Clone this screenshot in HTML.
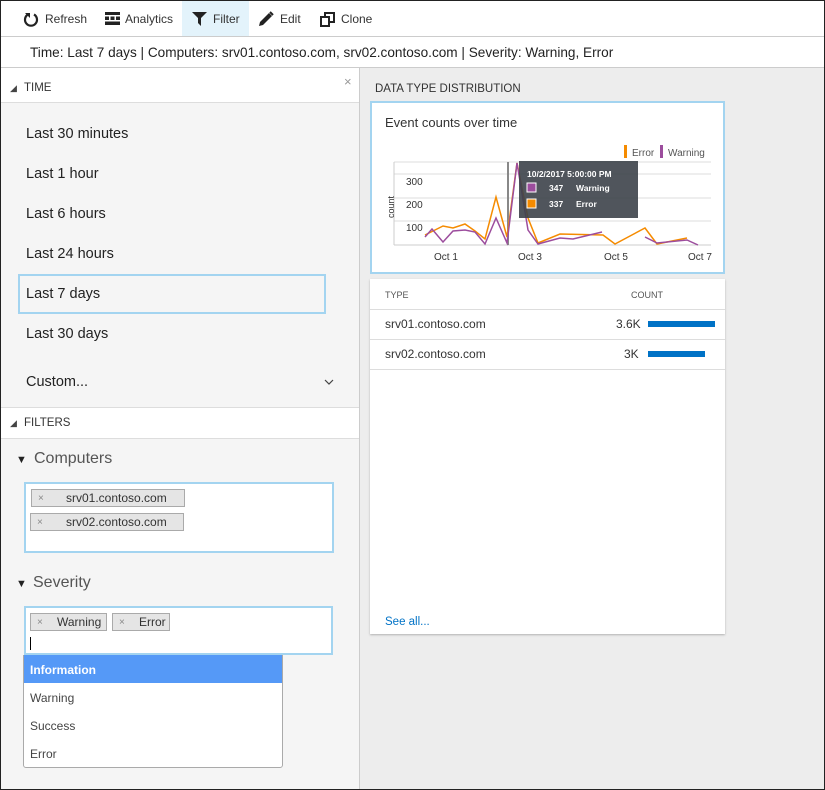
<!DOCTYPE html>
<html><head><meta charset="utf-8"><style>
*{box-sizing:border-box;margin:0;padding:0}
body{width:825px;height:790px;overflow:hidden;font-family:"Liberation Sans",sans-serif;color:#333;background:#fff}
.frame{position:absolute;left:0;top:0;width:825px;height:790px;border:1px solid #222}
.a{position:absolute}
.tb{font-size:12px;color:#333;top:12px}
.t{font-size:14.5px;color:#222}
.chip{position:absolute;background:#e5e5e5;border:1px solid #aaa;height:18px;font-size:12px;color:#333;line-height:16px}
.chip i{font-style:normal;color:#888;font-size:10px;position:absolute;left:6px;top:1px}
.dd{font-size:12px;color:#444;position:absolute;left:30px}
</style></head><body>
<div class="a" style="left:182px;top:1px;width:67px;height:35px;background:#e3f3fb"></div>
<div class="a" style="left:1px;top:36px;width:823px;height:1px;background:#ccc"></div>
<svg class="a" style="left:22px;top:11px" width="18" height="18" viewBox="0 0 18 18"><path d="M6 3.5A6 6 0 1 0 12 3.5" fill="none" stroke="#222" stroke-width="2.2"/><path d="M3 2h5v5z" fill="#222"/></svg>
<div class="a tb" style="left:45px">Refresh</div>
<svg class="a" style="left:105px;top:12px" width="15" height="13" viewBox="0 0 15 13"><rect x="0" y="0" width="15" height="3" fill="#222"/><rect x="0" y="4.5" width="4" height="3.5" fill="#222"/><rect x="5.5" y="4.5" width="4" height="3.5" fill="#222"/><rect x="11" y="4.5" width="4" height="3.5" fill="#222"/><rect x="0" y="9.5" width="15" height="3.5" fill="#222"/></svg>
<div class="a tb" style="left:125px">Analytics</div>
<svg class="a" style="left:192px;top:12px" width="15" height="14" viewBox="0 0 15 14"><path d="M0 0h15L9 6v8L6 11V6z" fill="#222"/></svg>
<div class="a tb" style="left:213px">Filter</div>
<svg class="a" style="left:258px;top:11px" width="16" height="16" viewBox="0 0 16 16"><path d="M1 15l1-4L11 2l3 3-9 9z" fill="#222"/><path d="M12 1l3 3" stroke="#222" stroke-width="2"/></svg>
<div class="a tb" style="left:280px">Edit</div>
<svg class="a" style="left:320px;top:12px" width="15" height="15" viewBox="0 0 15 15"><rect x="1" y="5" width="8" height="9" fill="none" stroke="#222" stroke-width="2"/><path d="M5 4V1h9v9h-4" fill="none" stroke="#222" stroke-width="2"/></svg>
<div class="a tb" style="left:341px">Clone</div>
<div class="a" style="left:30px;top:45px;font-size:13.6px;color:#222">Time: Last 7 days | Computers: srv01.contoso.com, srv02.contoso.com | Severity: Warning, Error</div>
<div class="a" style="left:1px;top:67px;width:823px;height:1px;background:#ccc"></div>
<div class="a" style="left:1px;top:68px;width:358px;height:721px;background:#f5f5f5"></div>
<div class="a" style="left:1px;top:68px;width:358px;height:35px;background:#fff;border-bottom:1px solid #ddd"></div>
<div class="a" style="left:359px;top:68px;width:1px;height:721px;background:#ccc"></div>
<div class="a" style="left:10px;top:83px;font-size:9px;color:#444">◢</div>
<div class="a" style="left:24px;top:82px;font-size:11.5px;color:#333">TIME</div>
<div class="a" style="left:344px;top:74px;font-size:13px;color:#999">×</div>
<div class="a t" style="left:26px;top:126px">Last 30 minutes</div>
<div class="a t" style="left:26px;top:166px">Last 1 hour</div>
<div class="a t" style="left:26px;top:206px">Last 6 hours</div>
<div class="a t" style="left:26px;top:246px">Last 24 hours</div>
<div class="a" style="left:18px;top:274px;width:308px;height:40px;border:2px solid #a3d4f0"></div>
<div class="a t" style="left:26px;top:286px">Last 7 days</div>
<div class="a t" style="left:26px;top:326px">Last 30 days</div>
<div class="a t" style="left:26px;top:374px">Custom...</div>
<svg class="a" style="left:324px;top:379px" width="10" height="6"><path d="M1 1l4 4 4-4" fill="none" stroke="#444" stroke-width="1.2"/></svg>
<div class="a" style="left:1px;top:407px;width:358px;height:32px;background:#fff;border-top:1px solid #ddd;border-bottom:1px solid #ddd"></div>
<div class="a" style="left:10px;top:418px;font-size:9px;color:#444">◢</div>
<div class="a" style="left:24px;top:417px;font-size:11.5px;color:#333">FILTERS</div>
<div class="a" style="left:16px;top:454px;font-size:11px;color:#222">▼</div>
<div class="a" style="left:34px;top:450px;font-size:16px;color:#555">Computers</div>
<div class="a" style="left:24px;top:482px;width:310px;height:71px;background:#fff;border:2px solid #a3d4f0"></div>
<div class="chip" style="left:31px;top:489px;width:154px"><i>×</i><span style="position:absolute;left:34px">srv01.contoso.com</span></div>
<div class="chip" style="left:30px;top:513px;width:154px"><i>×</i><span style="position:absolute;left:35px">srv02.contoso.com</span></div>
<div class="a" style="left:16px;top:578px;font-size:11px;color:#222">▼</div>
<div class="a" style="left:33px;top:574px;font-size:16px;color:#555">Severity</div>
<div class="a" style="left:24px;top:606px;width:309px;height:49px;background:#fff;border:2px solid #a3d4f0"></div>
<div class="chip" style="left:30px;top:613px;width:77px"><i>×</i><span style="position:absolute;left:26px">Warning</span></div>
<div class="chip" style="left:112px;top:613px;width:58px"><i>×</i><span style="position:absolute;left:26px">Error</span></div>
<div class="a" style="left:30px;top:637px;width:1px;height:13px;background:#000"></div>
<div class="a" style="left:23px;top:655px;width:260px;height:113px;background:#fff;border:1px solid #aaa;border-radius:0 0 3px 3px"></div>
<div class="a" style="left:24px;top:655px;width:258px;height:28px;background:#5599f7"></div>
<div class="dd" style="top:663px;color:#fff;font-weight:bold">Information</div>
<div class="dd" style="top:691px">Warning</div>
<div class="dd" style="top:719px">Success</div>
<div class="dd" style="top:747px">Error</div>
<div class="a" style="left:360px;top:68px;width:464px;height:721px;background:#ededed"></div>
<div class="a" style="left:375px;top:83px;font-size:11.5px;color:#333">DATA TYPE DISTRIBUTION</div>
<div class="a" style="left:370px;top:101px;width:355px;height:173px;background:#fff;border:2px solid #a3d4f0"></div>
<div class="a" style="left:385px;top:115px;font-size:13px;color:#333">Event counts over time</div>
<svg class="a" style="left:370px;top:100px" width="355" height="175">
<rect x="254" y="45" width="3" height="13" fill="#f58b00"/><text x="262" y="56" font-size="10" fill="#555" font-family="Liberation Sans">Error</text>
<rect x="290" y="45" width="3" height="13" fill="#9c4d9d"/><text x="298" y="56" font-size="10" fill="#555" font-family="Liberation Sans">Warning</text>
<g stroke="#ddd" stroke-width="1"><line x1="24" y1="62" x2="341" y2="62"/><line x1="24" y1="74" x2="341" y2="74"/><line x1="24" y1="98" x2="341" y2="98"/><line x1="24" y1="121" x2="341" y2="121"/><line x1="24" y1="145" x2="341" y2="145" stroke="#ccc"/><line x1="24" y1="62" x2="24" y2="145" stroke="#ccc"/></g>
<g font-size="10" fill="#333" font-family="Liberation Sans"><text x="36" y="85">300</text><text x="36" y="108">200</text><text x="36" y="131">100</text>
<text x="64" y="160">Oct 1</text><text x="148" y="160">Oct 3</text><text x="234" y="160">Oct 5</text><text x="318" y="160">Oct 7</text>
<text transform="translate(24,118) rotate(-90)" font-size="9">count</text></g>
<line x1="138" y1="62" x2="138" y2="145" stroke="#888" stroke-width="2"/>
<polyline fill="none" stroke="#f58b00" stroke-width="1.5" points="55,135 73,126 83,128 95,124 105,131 115,139 126,97 137,137 147,63 158,118 168,143 190,134 233,135 245,144 275,128 287,144 317,138"/>
<polyline fill="none" stroke="#9c4d9d" stroke-width="1.5" points="55,137 62,129 73,142 83,131 95,130 105,132 115,144 126,118 137,143 147,63 158,130 168,144 190,138 203,139 232,132"/>
<polyline fill="none" stroke="#9c4d9d" stroke-width="1.5" points="275,137 287,143 317,140 328,145"/>
<rect x="149" y="61" width="119" height="57" fill="#3d434a" opacity="0.9"/>
<g font-family="Liberation Sans" font-size="8.5" fill="#fff" font-weight="bold"><text x="157" y="77">10/2/2017 5:00:00 PM</text>
<rect x="157" y="83" width="9" height="9" fill="#9c4d9d" stroke="#fff"/><text x="179" y="91">347</text><text x="206" y="91">Warning</text>
<rect x="157" y="99" width="9" height="9" fill="#f58b00" stroke="#fff"/><text x="179" y="107">337</text><text x="206" y="107">Error</text></g>
</svg>
<div class="a" style="left:370px;top:279px;width:355px;height:355px;background:#fff;box-shadow:0 1px 2px rgba(0,0,0,.25)"></div>
<div class="a" style="left:385px;top:290px;font-size:9px;color:#555">TYPE</div>
<div class="a" style="left:631px;top:290px;font-size:9px;color:#555">COUNT</div>
<div class="a" style="left:370px;top:309px;width:355px;height:1px;background:#ddd"></div>
<div class="a" style="left:385px;top:317px;font-size:12px;color:#333">srv01.contoso.com</div>
<div class="a" style="left:616px;top:317px;font-size:12px;color:#333">3.6K</div>
<div class="a" style="left:648px;top:321px;width:67px;height:6px;background:#0072c6"></div>
<div class="a" style="left:370px;top:339px;width:355px;height:1px;background:#ddd"></div>
<div class="a" style="left:385px;top:347px;font-size:12px;color:#333">srv02.contoso.com</div>
<div class="a" style="left:624px;top:347px;font-size:12px;color:#333">3K</div>
<div class="a" style="left:648px;top:351px;width:57px;height:6px;background:#0072c6"></div>
<div class="a" style="left:370px;top:369px;width:355px;height:1px;background:#ddd"></div>
<div class="a" style="left:385px;top:616px;font-size:11.5px;color:#0072c6">See all...</div>
<div class="frame"></div>
</body></html>
